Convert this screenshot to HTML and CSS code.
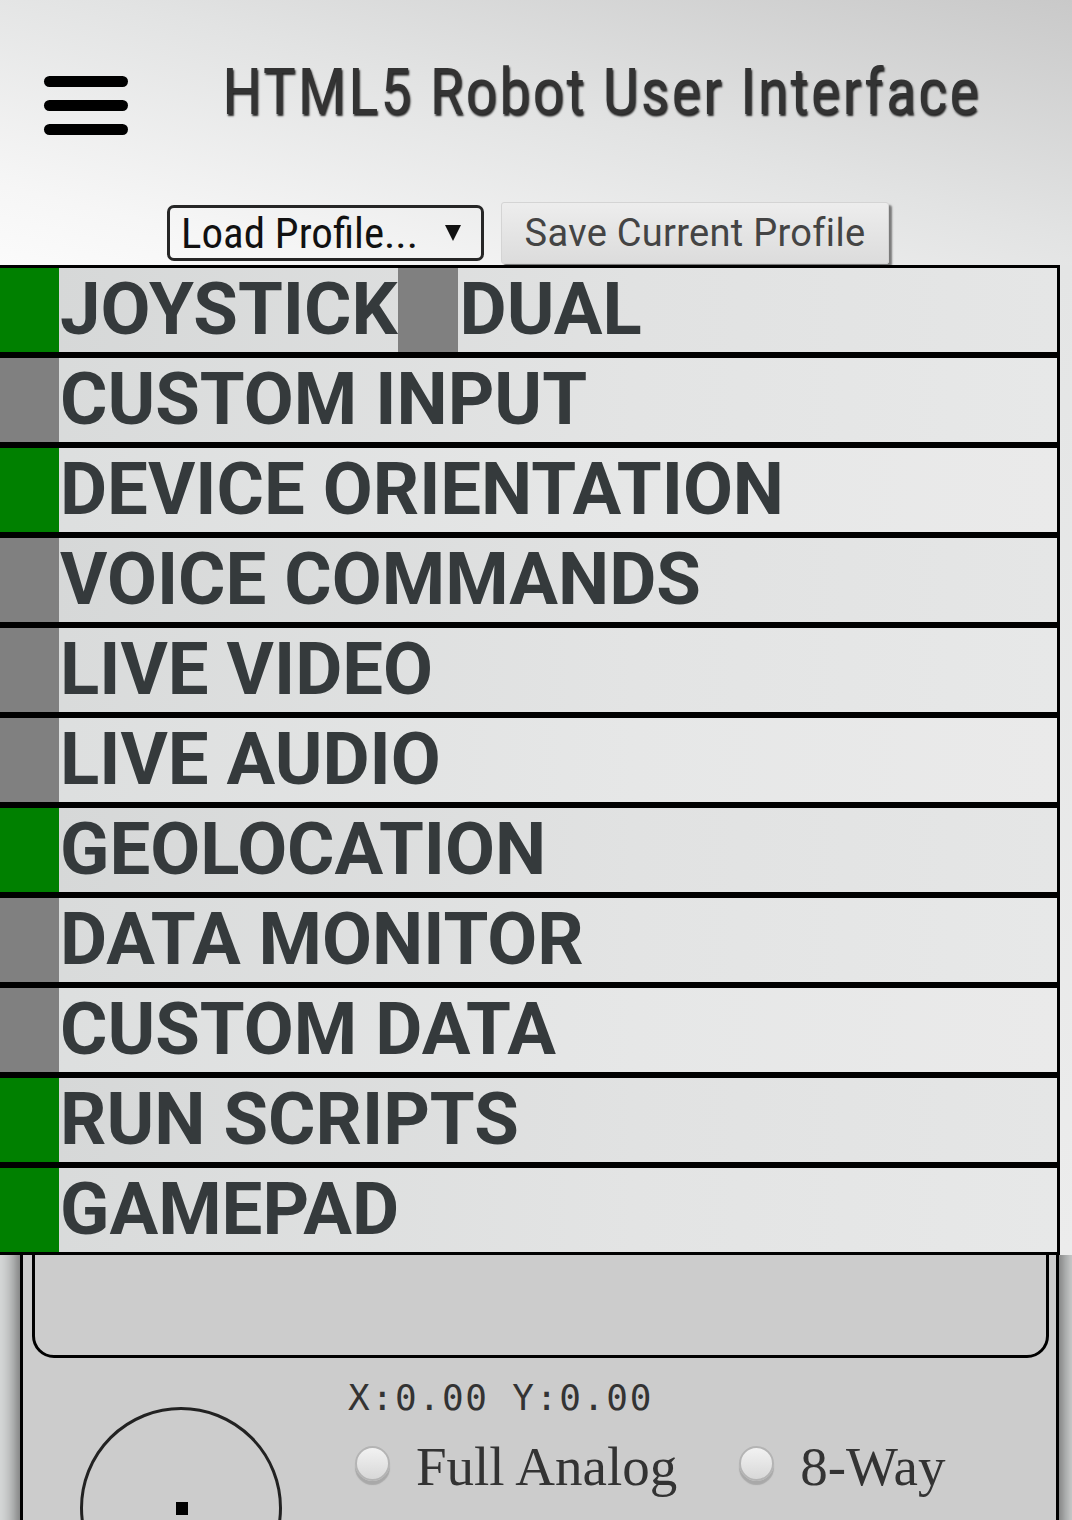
FILE: index.html
```html
<!DOCTYPE html>
<html lang="en">
<head>
<meta charset="utf-8">
<title>HTML5 Robot User Interface</title>
<link rel="stylesheet" href="styles.css">
</head>
<body>
<header class="header">
  <div class="topbar">
    <div class="burger" aria-label="Menu">
      <span class="bar"></span><span class="bar"></span><span class="bar"></span>
    </div>
    <h1 class="title">HTML5 Robot User Interface</h1>
  </div>
  <div class="controls">
    <div class="select">
      <span class="select-text">Load Profile...</span>
      <svg class="select-arrow" width="18" height="18" viewBox="0 0 18 18"><polygon points="1,1 17,1 9,17" fill="#111"/></svg>
    </div>
    <button class="save-btn">Save Current Profile</button>
  </div>
</header>

<main class="panel">
  <div class="viewbox"></div>
  <div class="joyrow">
    <div class="joystick"><span class="knob"></span></div>
    <div class="info">
      <div class="coords">X:0.00 Y:0.00</div>
      <div class="modes">
        <span class="radio"></span><span class="mode-label">Full Analog</span>
        <span class="radio radio-second"></span><span class="mode-label">8-Way</span>
      </div>
    </div>
  </div>
</main>

<nav class="menu">
  <div class="row"><span class="ind on"></span><span class="label">JOYSTICK</span><span class="ind-inline"></span><span class="label label-tight">DUAL</span></div>
  <div class="row"><span class="ind"></span><span class="label">CUSTOM INPUT</span></div>
  <div class="row"><span class="ind on"></span><span class="label">DEVICE ORIENTATION</span></div>
  <div class="row"><span class="ind"></span><span class="label">VOICE COMMANDS</span></div>
  <div class="row"><span class="ind"></span><span class="label">LIVE VIDEO</span></div>
  <div class="row"><span class="ind"></span><span class="label">LIVE AUDIO</span></div>
  <div class="row"><span class="ind on"></span><span class="label">GEOLOCATION</span></div>
  <div class="row"><span class="ind"></span><span class="label">DATA MONITOR</span></div>
  <div class="row"><span class="ind"></span><span class="label">CUSTOM DATA</span></div>
  <div class="row"><span class="ind on"></span><span class="label">RUN SCRIPTS</span></div>
  <div class="row"><span class="ind on"></span><span class="label">GAMEPAD</span></div>
</nav>
</body>
</html>
```

FILE: styles.css
```css
* { box-sizing: border-box; }

html, body {
  margin: 0;
  padding: 0;
}

body {
  width: 1072px;
  height: 1520px;
  overflow: hidden;
  position: relative;
  background: #d8dada;
  font-family: "Roboto Condensed", Roboto, sans-serif;
}

.header {
  position: relative;
  z-index: 1;
  height: 265px;
  background: linear-gradient(to bottom left, #c9c9c9 0%, #e2e3e3 45%, #f6f6f6 85%, #fbfbfb 100%);
}

.topbar {
  display: flex;
  align-items: flex-start;
  height: 190px;
}

.burger {
  display: flex;
  flex-direction: column;
  gap: 13px;
  margin: 76px 0 0 44px;
}

.bar {
  display: block;
  width: 84px;
  height: 11px;
  border-radius: 6px;
  background: #000;
}

.title {
  margin: 60px 0 0 94px;
  font-family: "Roboto Condensed", Roboto, sans-serif;
  font-weight: 400;
  font-size: 65px;
  line-height: 65px;
  letter-spacing: 1.2px;
  color: #333;
  text-shadow: 1px 2px 2px rgba(0, 0, 0, 0.85);
  white-space: nowrap;
}

.controls {
  display: flex;
  align-items: flex-start;
  padding-left: 167px;
  gap: 17px;
}

.select {
  display: flex;
  align-items: center;
  width: 317px;
  height: 56px;
  margin-top: 15px;
  padding-left: 11px;
  border: 3px solid #262626;
  border-radius: 7px;
}

.select-text {
  font-size: 43px;
  line-height: 50px;
  color: #111;
  white-space: nowrap;
}

.select-arrow {
  margin-left: auto;
  margin-right: 19px;
}

.save-btn {
  width: 388px;
  height: 62px;
  margin-top: 12px;
  padding: 0;
  border: 1px solid #d4d4d4;
  border-radius: 3px;
  background: linear-gradient(to bottom, #ededed, #dcdcdc);
  box-shadow: 3px 3px 2px #7a7a7a;
  font-family: Roboto, sans-serif;
  font-size: 38px;
  letter-spacing: 0.3px;
  color: #444;
  white-space: nowrap;
}

/* lower panel */
.panel {
  width: 1039px;
  height: 1300px;
  margin-left: 20px;
  padding: 4px 7px 0 9px;
  background: #cccccc;
  border: 3px solid #000;
  border-bottom: none;
  box-shadow: 0 0 18px 3px rgba(0, 0, 0, 0.6);
}

.viewbox {
  height: 1086px;
  border: 3px solid #000;
  border-radius: 22px;
}

.joyrow {
  display: flex;
  align-items: flex-start;
}

.joystick {
  position: relative;
  width: 202px;
  height: 202px;
  margin: 49px 0 0 48px;
  border: 3px solid #222;
  border-radius: 50%;
  flex: none;
}

.knob {
  position: absolute;
  left: 93px;
  top: 92px;
  width: 12px;
  height: 13px;
  background: #000;
}

.info {
  margin: 20px 0 0 66px;
}

.coords {
  font-family: "DejaVu Sans Mono", monospace;
  font-size: 36px;
  line-height: 40px;
  letter-spacing: 1.8px;
  color: #333;
  white-space: pre;
}

.modes {
  display: flex;
  align-items: flex-start;
  margin-top: 20px;
}

.radio {
  flex: none;
  width: 35px;
  height: 35px;
  margin: 8px 0 0 7px;
  border: 2px solid #b4b4b4;
  border-radius: 50%;
  background: linear-gradient(to bottom, #f2f2f2, #d8d8d8);
  box-shadow: 0 4px 1px #a9a9a9;
}

.radio-second {
  margin-left: 62px;
}

.mode-label {
  margin-left: 26px;
  font-family: "Liberation Serif", serif;
  font-size: 55px;
  line-height: 58px;
  color: #333;
  white-space: nowrap;
}

/* overlay menu */
.menu {
  position: absolute;
  z-index: 2;
  top: 265px;
  left: 0;
  width: 1072px;
  background: linear-gradient(to bottom, #e4e5e5, #ececec);
}

.row {
  display: flex;
  align-items: stretch;
  width: 1063px;
  height: 90px;
  margin-left: -3px;
  border: 3px solid #000;
  background: linear-gradient(to right, #d5d7d7, #e1e2e2 60%, #e5e6e6);
}

.row:nth-child(3n+2) { background: linear-gradient(to right, #d8dada, #e3e4e4 60%, #e7e8e8); }
.row:nth-child(3n) { background: linear-gradient(to right, #dcdede, #e6e7e7 60%, #eaeaea); }

.ind {
  flex: none;
  width: 59px;
  background: #808080;
}

.ind.on {
  background: #008000;
}

.ind-inline {
  flex: none;
  width: 60px;
  background: #808080;
}

.label {
  padding-left: 1px;
  font-family: Roboto, sans-serif;
  font-weight: 700;
  font-size: 72.5px;
  line-height: 84px;
  color: #353a3c;
  white-space: nowrap;
}

.label-tight {
  padding-left: 2px;
}
```
